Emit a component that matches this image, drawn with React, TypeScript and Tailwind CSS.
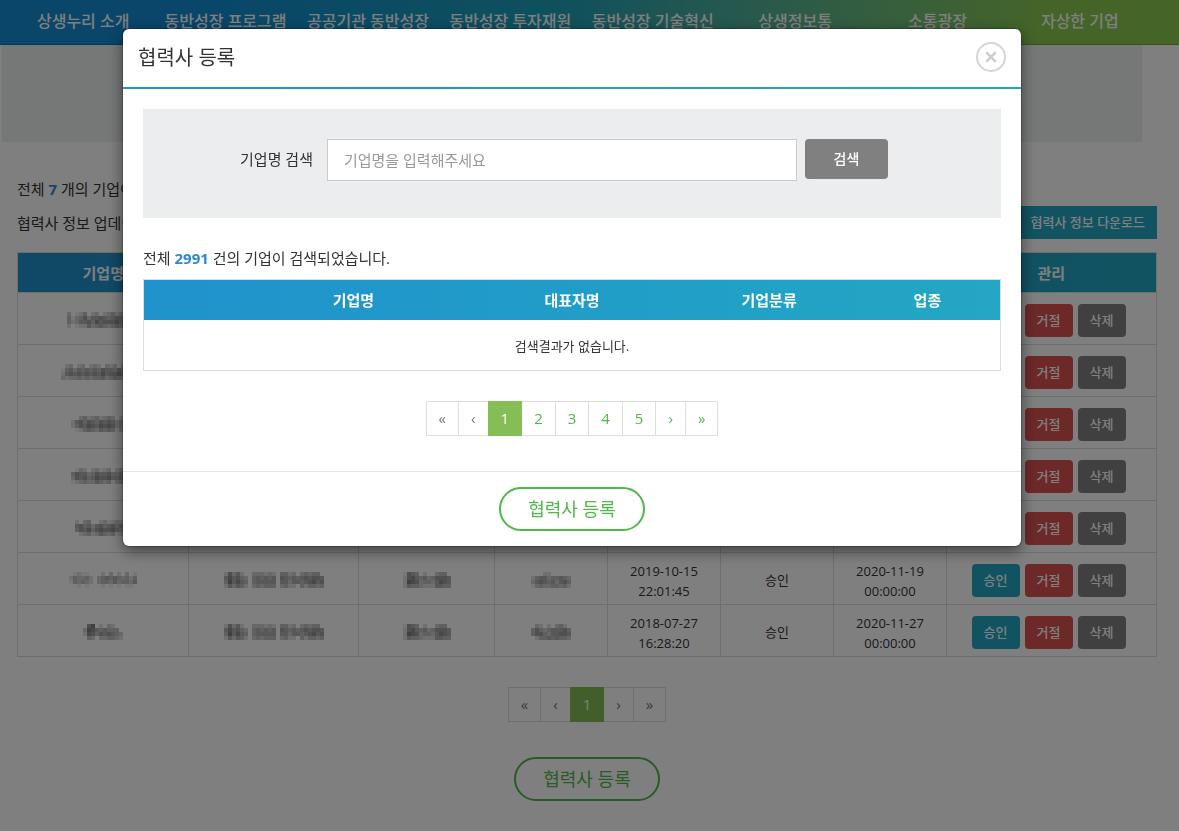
import { useState } from "react";
import clsx from "clsx";

const menus = [
  "상생누리 소개",
  "동반성장 프로그램",
  "공공기관 동반성장",
  "동반성장 투자재원",
  "동반성장 기술혁신",
  "상생정보통",
  "소통광장",
  "자상한 기업",
];

// Masked values: one digit per 4px block, 0 = empty, 9 = darkest
const masks = {
  nameA: ["301240230234230231", "413463556545654524", "423556475666757633", "201225345434543412"],
  nameB: ["023023023203230231023", "145354545465546452543", "256565656575667563653", "323343434453454341432"],
  nameC: ["0034234234302340", "2564654656534565", "2465765767634676", "0124543545413454"],
  nameD: ["0132023123023402", "4655346556445646", "3656457667556746", "1234335434134233"],
  nameE: ["20340023123203", "56453564564546", "46574676675465", "02342354341232"],
  nameF: ["01211000203020301", "24334203454543424", "14343203443534435", "00101000101010110"],
  nameG: ["0680203200", "3875454440", "2764656543", "0430334432"],
  group: ["2635200333232044230343440", "5756430454545065454565665", "4857540455555055355456756", "2535420343444034220424434"],
  type: ["165402003440", "267545346665", "287634435765", "254432225544"],
  ceoA: ["0002200000", "2455344543", "3565453564", "1343344342"],
  ceoB: ["0320203420", "4643455564", "4664355665", "0244545443"],
};

type MaskName = keyof typeof masks;

type Row = {
  name: MaskName;
  group?: MaskName;
  type?: MaskName;
  ceo?: MaskName;
  created?: [string, string];
  status?: string;
  updated?: [string, string];
};

const rows: Row[] = [
  { name: "nameA" },
  { name: "nameB" },
  { name: "nameC" },
  { name: "nameD" },
  { name: "nameE" },
  {
    name: "nameF",
    group: "group",
    type: "type",
    ceo: "ceoA",
    created: ["2019-10-15", "22:01:45"],
    status: "승인",
    updated: ["2020-11-19", "00:00:00"],
  },
  {
    name: "nameG",
    group: "group",
    type: "type",
    ceo: "ceoB",
    created: ["2018-07-27", "16:28:20"],
    status: "승인",
    updated: ["2020-11-27", "00:00:00"],
  },
];

const Mask = ({ name }: { name?: MaskName }) => {
  if (!name) return null;
  const pattern = masks[name];
  const width = pattern[0].length * 4;
  return (
    <svg className="mx-auto block" width={width} height={16} shapeRendering="crispEdges" aria-hidden="true">
      {pattern.map((line, y) =>
        line.split("").map((level, x) => (
          <rect key={`${x}-${y}`} x={x * 4} y={y * 4} width={4} height={4} fill="#333" opacity={Number(level) / 13} />
        ))
      )}
    </svg>
  );
};

const Pagination = ({ pages, muted, label }: { pages: number[]; muted: string[]; label: string }) => {
  const items = ["«", "‹", ...pages.map(String), "›", "»"];
  return (
    <nav aria-label={label} className="flex justify-center">
      <ul className="flex border-l border-[#ddd] text-[15px] leading-[21px]">
        {items.map((item) => (
          <li key={item}>
            <a
              href="#"
              className={clsx(
                "block border px-3 py-1.5",
                item === "1" ? "-ml-px border-[#85be56] bg-[#85be56] text-white" : "border-l-0 border-[#ddd] bg-white",
                item !== "1" && (muted.includes(item) ? "text-[#777]" : "text-[#4fb848]")
              )}
            >
              {item}
            </a>
          </li>
        ))}
      </ul>
    </nav>
  );
};

const RegisterButton = () => (
  <button
    type="button"
    className="h-11 rounded-full border-2 border-[#4fb848] bg-white px-[27px] text-lg leading-6 text-[#4fb848]"
  >
    협력사 등록
  </button>
);

const PartnerPage = () => (
  <div className="min-h-screen bg-white">
    <header className="h-[45px] border-b border-[#00000030] bg-linear-to-r from-[#128cd4] from-15% via-[#1ea2b8] via-48% to-[#88c850] to-88%">
      <nav className="grid grid-cols-8 pr-7 pl-3 text-center text-base leading-[42px] font-medium whitespace-nowrap text-white">
        {menus.map((menu) => (
          <a key={menu} href="#">
            {menu}
          </a>
        ))}
      </nav>
    </header>

    <div className="mr-[37px] ml-0.5 h-[97px] bg-[#ecf0ef]" />

    <main className="mr-[22px] ml-[17px] pt-[30px]">
      <div className="flex items-start justify-between">
        <div className="text-[15px] leading-[34px]">
          <p>
            전체 <strong className="text-[#2a8bd2]">7</strong> 개의 기업이
          </p>
          <p>협력사 정보 업데이트</p>
        </div>
        <button type="button" className="mt-[34px] h-[33px] bg-[#23a7c3] px-3 text-[13px] font-medium text-white">
          협력사 정보 다운로드
        </button>
      </div>

      <table className="mt-3 w-full table-fixed border-collapse border border-[#ddd] text-center text-[13px] leading-5">
        <colgroup>
          <col className="w-[171px]" />
          <col className="w-[170px]" />
          <col className="w-[136px]" />
          <col className="w-[113px]" />
          <col className="w-[113px]" />
          <col className="w-[113px]" />
          <col className="w-[113px]" />
          <col />
        </colgroup>
        <thead>
          <tr className="h-10 bg-linear-to-r from-[#2092cd] to-[#23a7c3] text-[15px] text-white">
            <th>기업명</th>
            <th colSpan={6} />
            <th>관리</th>
          </tr>
        </thead>
        <tbody>
          {rows.map((row) => (
            <tr key={row.name} className="h-[52px]">
              <td className="border border-[#ddd] pt-0.5">
                <Mask name={row.name} />
              </td>
              <td className="border border-[#ddd] pt-0.5">
                <Mask name={row.group} />
              </td>
              <td className="border border-[#ddd] pt-0.5">
                <Mask name={row.type} />
              </td>
              <td className="border border-[#ddd] pt-0.5">
                <Mask name={row.ceo} />
              </td>
              <td className="border border-[#ddd] pt-1">
                {row.created?.map((text) => (
                  <div key={text}>{text}</div>
                ))}
              </td>
              <td className="border border-[#ddd] pt-0.5">{row.status}</td>
              <td className="border border-[#ddd] pt-1">
                {row.updated?.map((text) => (
                  <div key={text}>{text}</div>
                ))}
              </td>
              <td className="border border-[#ddd] pt-1">
                <div className="flex justify-center gap-[5px] pr-1.5 font-medium text-white">
                  <button type="button" className="h-[33px] w-12 rounded bg-[#23a7c3] pb-0.5">
                    승인
                  </button>
                  <button type="button" className="h-[33px] w-12 rounded bg-[#d9534f] pb-0.5">
                    거절
                  </button>
                  <button type="button" className="h-[33px] w-12 rounded bg-[#808080] pb-0.5">
                    삭제
                  </button>
                </div>
              </td>
            </tr>
          ))}
        </tbody>
      </table>

      <div className="pt-[30px]">
        <Pagination pages={[1]} muted={["«", "‹", "›", "»"]} label="협력사 목록 페이지" />
      </div>
      <div className="flex justify-center pt-[35px] pb-[30px]">
        <RegisterButton />
      </div>
    </main>
  </div>
);

const RegisterModal = ({ onClose }: { onClose: () => void }) => {
  const [keyword, setKeyword] = useState("");

  return (
    <div className="fixed inset-0 flex items-start justify-center bg-black/50 pt-[29px] pr-[35px]">
      <div
        role="dialog"
        aria-modal="true"
        aria-labelledby="modal-title"
        className="w-full max-w-[898px] rounded-md bg-white shadow-[0_5px_15px_rgba(0,0,0,0.5),0_0_0_1px_rgba(0,0,0,0.2)]"
      >
        <div className="flex h-[58px] items-center justify-between px-[15px] pb-0.5">
          <h4 id="modal-title" className="pt-0.5 text-xl leading-7">
            협력사 등록
          </h4>
          <button
            type="button"
            aria-label="닫기"
            onClick={onClose}
            className="flex size-[30px] items-center justify-center rounded-full border-2 border-[#d5d5d5] text-[#ccc]"
          >
            <svg width="12" height="12" viewBox="0 0 12 12" fill="none" stroke="currentColor" strokeWidth="2.4">
              <path d="M1.2 1.2l9.6 9.6M10.8 1.2l-9.6 9.6" />
            </svg>
          </button>
        </div>
        <div className="h-0.5 bg-linear-to-r from-[#2092cd] to-[#23a7c3]" />

        <div className="px-5 pt-5">
          <form
            className="flex items-start justify-center bg-[#ecedef] pt-[30px] pr-4 pb-[37px]"
            onSubmit={(e) => e.preventDefault()}
          >
            <label htmlFor="company" className="pr-[14px] text-[15px] leading-10">
              기업명 검색
            </label>
            <input
              id="company"
              type="text"
              value={keyword}
              onChange={(e) => setKeyword(e.target.value)}
              placeholder="기업명을 입력해주세요"
              className="h-[42px] w-full max-w-[470px] border border-[#ccc] bg-white px-4 text-[15px] placeholder:text-[#999]"
            />
            <button
              type="submit"
              className="ml-2 h-10 w-[83px] rounded bg-[#808080] text-sm font-medium text-white"
            >
              검색
            </button>
          </form>

          <p className="pt-[30px] pb-[11px] text-[15px] leading-5">
            전체 <strong className="text-[#2a8bd2]">2991</strong> 건의 기업이 검색되었습니다.
          </p>

          <table className="w-full table-fixed border-collapse border border-[#ddd] text-center">
            <thead>
              <tr className="h-10 bg-linear-to-r from-[#2092cd] to-[#23a7c3] text-[15px] text-white">
                <th className="w-[12%]" />
                <th className="w-[25%]">기업명</th>
                <th className="w-[26%]">대표자명</th>
                <th className="w-[20%]">기업분류</th>
                <th className="w-[17%]">업종</th>
              </tr>
            </thead>
            <tbody>
              <tr className="h-[51px]">
                <td colSpan={5} className="pt-1 text-[13px]">
                  검색결과가 없습니다.
                </td>
              </tr>
            </tbody>
          </table>

          <div className="pt-[30px] pb-[35px]">
            <Pagination pages={[1, 2, 3, 4, 5]} muted={["«", "‹"]} label="검색결과 페이지" />
          </div>
        </div>

        <div className="flex justify-center border-t border-[#e5e5e5] py-[15px]">
          <RegisterButton />
        </div>
      </div>
    </div>
  );
};

export default function App() {
  const [open, setOpen] = useState(true);

  return (
    <div className="font-['Open_Sans','Noto_Sans_CJK_KR',sans-serif] text-[#333]">
      <PartnerPage />
      {open && <RegisterModal onClose={() => setOpen(false)} />}
    </div>
  );
}
